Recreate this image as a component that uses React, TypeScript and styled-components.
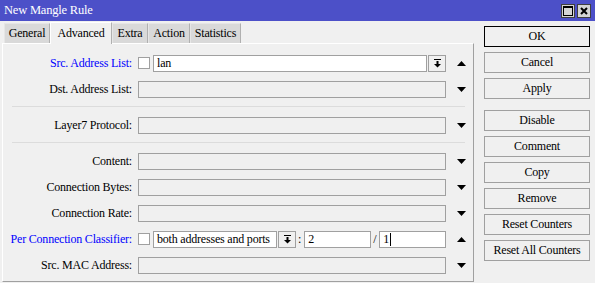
import { FC } from "react";
import styled, { createGlobalStyle } from "styled-components";

const GlobalStyle = createGlobalStyle`
  html, body {
    margin: 0;
    padding: 0;
    background: #f0f0f0;
  }
`

const Window = styled.div`
  width: 595px;
  height: 283px;
  display: flex;
  flex-direction: column;
  background: #f0f0f0;
  overflow: hidden;
  font-family: "Liberation Serif", "DejaVu Serif", serif;
  font-size: 12px;
  letter-spacing: -0.2px;
  color: #000;
`

const TitleBar = styled.div`
  height: 21px;
  background: #4c50c8;
  display: flex;
  align-items: center;
  justify-content: space-between;
  padding: 0 4px 0 4px;
  color: #fff;
  font-size: 12.5px;
`

const TitleButtons = styled.div`
  display: flex;
  gap: 2px;
`

const TitleButton = styled.div`
  width: 14px;
  height: 14px;
  box-sizing: border-box;
  background: #d4d4d4;
  border: 1px solid #404040;
  display: flex;
  align-items: center;
  justify-content: center;
`

const Body = styled.div`
  flex: 1;
  display: flex;
`

const LeftSide = styled.div`
  width: 472px;
  padding-left: 2px;
  display: flex;
  flex-direction: column;
`

const TabStrip = styled.div`
  height: 22px;
  display: flex;
  align-items: flex-end;
  padding-left: 2px;
`

const Tab = styled.div<{ $active?: boolean; $w: number }>`
  box-sizing: border-box;
  width: ${p => p.$w}px;
  height: ${p => (p.$active ? "22px" : "20px")};
  display: flex;
  align-items: center;
  justify-content: center;
  white-space: nowrap;
  background: ${p => (p.$active ? "#f0f0f0" : "#d9d9d9")};
  border: 1px solid ${p => (p.$active ? "#ffffff" : "#e6e6e6")};
  border-right-color: #b0b0b0;
  border-bottom: none;
  position: relative;
  z-index: ${p => (p.$active ? 1 : 0)};
  margin-bottom: ${p => (p.$active ? "-1px" : "0")};
`

const Panel = styled.div`
  flex: 1;
  box-sizing: border-box;
  border: 1px solid #ffffff;
  border-right-color: #a0a0a0;
  border-bottom-color: #a0a0a0;
  padding-top: 6px;
  margin-bottom: 1px;
`

const Row = styled.div`
  height: 26px;
  display: grid;
  grid-template-columns: 129px 308px 18px;
  column-gap: 6px;
  align-items: center;
`

const Label = styled.div<{ $blue?: boolean }>`
  text-align: right;
  white-space: nowrap;
  color: ${p => (p.$blue ? "#0000ff" : "#000")};
`

const Field = styled.div`
  display: flex;
  align-items: center;
  height: 17px;
`

const Input = styled.div<{ $enabled?: boolean; $width?: number }>`
  box-sizing: border-box;
  height: 17px;
  border: 1px solid #a0a0a0;
  background: ${p => (p.$enabled ? "#fff" : "#f0f0f0")};
  padding: 0 3px;
  display: flex;
  align-items: center;
  white-space: nowrap;
  overflow: hidden;
  ${p => (p.$width ? `width: ${p.$width}px; flex: none;` : "flex: 1;")}
`

const Check = styled.div`
  box-sizing: border-box;
  width: 12px;
  height: 12px;
  border: 1px solid #a0a0a0;
  background: #fff;
  margin-right: 3px;
  flex: none;
`

const DropButton = styled.div`
  box-sizing: border-box;
  width: 18px;
  height: 17px;
  margin-left: 1px;
  border: 1px solid #a0a0a0;
  background: #f0f0f0;
  display: flex;
  align-items: center;
  justify-content: center;
  flex: none;
`

const Sep = styled.div`
  height: 1px;
  background: #dcdcdc;
  margin: 4px 9px 5px 9px;
  width: 453px;
`

const Glue = styled.span`
  padding: 0 3px 0 2px;
`

const Caret = styled.span`
  display: inline-block;
  width: 1px;
  height: 13px;
  background: #000;
  margin-left: 1px;
`

const Arrow = styled.div`
  display: flex;
  justify-content: center;
`

const RightSide = styled.div`
  flex: 1;
  padding: 5px 0 0 10px;
  display: flex;
  flex-direction: column;
`

const Btn = styled.div<{ $default?: boolean; $gapTop?: number }>`
  box-sizing: border-box;
  width: 106px;
  height: 21px;
  margin-top: ${p => p.$gapTop ?? 5}px;
  border: 1px solid ${p => (p.$default ? "#000" : "#a0a0a0")};
  background: #f0f0f0;
  display: flex;
  align-items: center;
  justify-content: center;
  white-space: nowrap;
`

const DropIcon: FC = () => (
  <svg width="9" height="9" viewBox="0 0 9 9">
    <rect x="1" y="0" width="7" height="1" fill="#000" />
    <rect x="3.5" y="2" width="2" height="3" fill="#000" />
    <polygon points="1,5 8,5 4.5,8.5" fill="#000" />
  </svg>
)

const TriUp: FC = () => (
  <svg width="9" height="5" viewBox="0 0 9 5">
    <polygon points="0,5 9,5 4.5,0" fill="#000" />
  </svg>
)

const TriDown: FC = () => (
  <svg width="9" height="5" viewBox="0 0 9 5">
    <polygon points="0,0 9,0 4.5,5" fill="#000" />
  </svg>
)

const PlainRow: FC<{ label: string }> = ({ label }) => (
  <Row>
    <Label>{label}</Label>
    <Field>
      <Input />
    </Field>
    <Arrow><TriDown /></Arrow>
  </Row>
)

const tabs = [
  ["General", 46], ["Advanced", 62], ["Extra", 36], ["Action", 42], ["Statistics", 51],
] as const

const buttons = [
  ["OK", 0], ["Cancel", 5], ["Apply", 5], ["Disable", 11], ["Comment", 5],
  ["Copy", 5], ["Remove", 5], ["Reset Counters", 5], ["Reset All Counters", 5],
] as const

const App: FC = () => (
  <Window>
    <GlobalStyle />
    <TitleBar>
      <span>New Mangle Rule</span>
      <TitleButtons>
        <TitleButton>
          <svg width="10" height="10" viewBox="0 0 10 10">
            <rect x="0.5" y="0.5" width="9" height="9" fill="none" stroke="#000" />
            <rect x="0" y="0" width="10" height="2" fill="#000" />
          </svg>
        </TitleButton>
        <TitleButton>
          <svg width="8" height="8" viewBox="0 0 8 8">
            <path d="M1 1 L7 7 M7 1 L1 7" stroke="#000" strokeWidth="2" />
          </svg>
        </TitleButton>
      </TitleButtons>
    </TitleBar>
    <Body>
      <LeftSide>
        <TabStrip>
          {tabs.map(([name, w]) => (
            <Tab key={name} $w={w} $active={name === "Advanced"}>{name}</Tab>
          ))}
        </TabStrip>
        <Panel>
          <Row>
            <Label $blue>Src. Address List:</Label>
            <Field>
              <Check />
              <Input $enabled>lan</Input>
              <DropButton><DropIcon /></DropButton>
            </Field>
            <Arrow><TriUp /></Arrow>
          </Row>
          <PlainRow label="Dst. Address List:" />
          <Sep />
          <PlainRow label="Layer7 Protocol:" />
          <Sep />
          <PlainRow label="Content:" />
          <PlainRow label="Connection Bytes:" />
          <PlainRow label="Connection Rate:" />
          <Row>
            <Label $blue>Per Connection Classifier:</Label>
            <Field>
              <Check />
              <Input $enabled $width={124}>both addresses and ports</Input>
              <DropButton><DropIcon /></DropButton>
              <Glue>:</Glue>
              <Input $enabled $width={67}>2</Input>
              <Glue>/</Glue>
              <Input $enabled>1<Caret /></Input>
            </Field>
            <Arrow><TriUp /></Arrow>
          </Row>
          <PlainRow label="Src. MAC Address:" />
        </Panel>
      </LeftSide>
      <RightSide>
        {buttons.map(([text, gap]) => (
          <Btn key={text} $default={text === "OK"} $gapTop={gap}>{text}</Btn>
        ))}
      </RightSide>
    </Body>
  </Window>
)

export default App
